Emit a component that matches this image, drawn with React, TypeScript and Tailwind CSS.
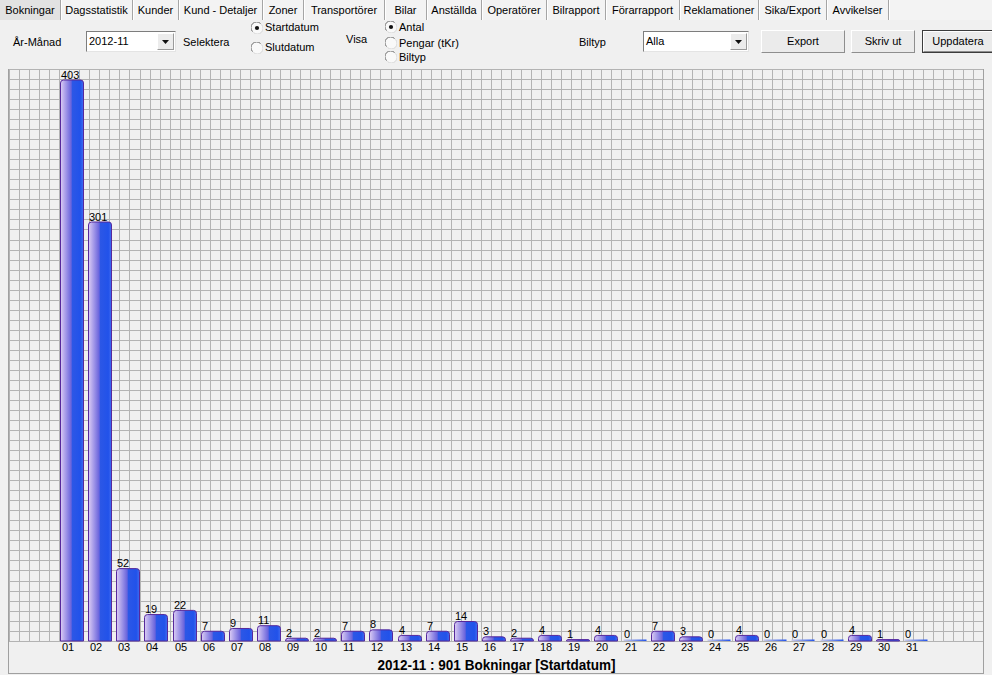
import React from 'react';

const tabs = [
  { label: 'Bokningar', w: 'w-[61px]' },
  { label: 'Dagsstatistik', w: 'w-[72px]' },
  { label: 'Kunder', w: 'w-[46px]' },
  { label: 'Kund - Detaljer', w: 'w-[84px]' },
  { label: 'Zoner', w: 'w-[41px]' },
  { label: 'Transportörer', w: 'w-[81px]' },
  { label: 'Bilar', w: 'w-[42px]' },
  { label: 'Anställda', w: 'w-[55px]' },
  { label: 'Operatörer', w: 'w-[65px]' },
  { label: 'Bilrapport', w: 'w-[59px]' },
  { label: 'Förarrapport', w: 'w-[74px]' },
  { label: 'Reklamationer', w: 'w-[79px]' },
  { label: 'Sika/Export', w: 'w-[68px]' },
  { label: 'Avvikelser', w: 'w-[62px]' },
];

const values = [403, 301, 52, 19, 22, 7, 9, 11, 2, 2, 7, 8, 4, 7, 14, 3, 2, 4, 1, 4, 0, 7, 3, 0, 4, 0, 0, 0, 4, 1, 0];

const BASE = 572;
const SCALE = 1.392;

function Radio({ checked }: { checked?: boolean }) {
  return (
    <svg width="12" height="12" viewBox="0 0 12 12" className="shrink-0">
      <circle cx="6" cy="6" r="5.5" fill="#f9f9f9" />
      <path d="M1.6 9.6 A5 5 0 0 1 9.6 1.6" fill="none" stroke="#6f6f6f" />
      <path d="M2.4 10.4 A5 5 0 0 0 10.4 2.4" fill="none" stroke="#d8d8d8" />
      {checked && <circle cx="6" cy="6" r="2.1" fill="#111" />}
    </svg>
  );
}

function Combo({ text, w }: { text: string; w: string }) {
  return (
    <div className={`${w} mt-[11px] h-[21px] shrink-0 bg-white border border-t-[#7d7d7d] border-l-[#7d7d7d] border-b-[#e4e4e4] border-r-[#e4e4e4] flex items-center`}>
      <span className="flex-1 pl-[2px]">{text}</span>
      <span className="w-[17px] h-[17px] mr-[1px] bg-[#ececec] border border-t-white border-l-white border-b-[#9a9a9a] border-r-[#9a9a9a] flex items-center justify-center">
        <svg width="7" height="4" viewBox="0 0 7 4">
          <path d="M0 0 H7 L3.5 4 Z" fill="#111" />
        </svg>
      </span>
    </div>
  );
}

function Button({ label, w, primary }: { label: string; w: string; primary?: boolean }) {
  return (
    <div className={`${w} mt-[10px] h-[23px] shrink-0 ${primary ? 'border border-[#3c3c3c]' : ''}`}>
      <div className="w-full h-full bg-[#ebebeb] border border-t-white border-l-white border-b-[#8e8e8e] border-r-[#8e8e8e] flex items-center justify-center">
        {label}
      </div>
    </div>
  );
}

function Chart() {
  const vLines: number[] = [];
  for (let k = 0; k <= 97; k++) vLines.push(Math.round(1 + k * 10.04) + 0.5);
  const hLines: number[] = [];
  for (let k = 0; k <= 57; k++) hLines.push(Math.round(k * 10.03) + 0.5);

  return (
    <svg width="976" height="605" className="block" style={{ fontFamily: '"Liberation Sans", Arial, sans-serif' }}>
      <defs>
        <linearGradient id="barFill" x1="0" y1="0" x2="1" y2="0">
          <stop offset="0" stopColor="#dccdf4" />
          <stop offset="0.46" stopColor="#6a64dc" />
          <stop offset="0.52" stopColor="#2c57e6" />
          <stop offset="0.86" stopColor="#2152ea" />
          <stop offset="1" stopColor="#416bf0" />
        </linearGradient>
        <linearGradient id="zeroFill" x1="0" y1="0" x2="1" y2="0">
          <stop offset="0" stopColor="#c9c9e8" />
          <stop offset="1" stopColor="#2152ea" />
        </linearGradient>
      </defs>
      <rect x="0" y="0" width="976" height="605" fill="#f0f0f0" />
      <g stroke="#b3b3b3" strokeWidth="1" shapeRendering="crispEdges">
        {vLines.map((x) => (
          <line key={'v' + x} x1={x} y1={0} x2={x} y2={BASE} />
        ))}
        {hLines.map((y) => (
          <line key={'h' + y} x1={1} y1={y} x2={975.5} y2={y} />
        ))}
        <line x1={1} y1={BASE + 0.5} x2={975.5} y2={BASE + 0.5} />
      </g>

      {values.map((v, i) => {
        const x0 = Math.round(52 + i * 28.13) + 0.5;
        const w = 23;
        const h = v * SCALE;
        const top = BASE - h;
        const day = String(i + 1).padStart(2, '0');
        let bar: React.ReactNode;
        if (v === 0) {
          bar = <rect x={x0} y={BASE - 1.5} width={w} height={1.5} fill="url(#zeroFill)" />;
        } else {
          const r = Math.min(3, h);
          const d = `M${x0} ${BASE} V${top + r} Q${x0} ${top} ${x0 + r} ${top} H${x0 + w - r} Q${x0 + w} ${top} ${x0 + w} ${top + r} V${BASE}`;
          bar = <path d={d + ' Z'} fill="url(#barFill)" stroke="#56289c" strokeWidth="1" />;
        }
        return (
          <g key={i}>
            {bar}
            <text x={x0 + 0.5} y={v === 0 ? BASE - 3 : top - 1.5} fontSize="11" fill="#000">
              {v}
            </text>
            <text x={x0 + 1.5} y={582} fontSize="11" fill="#000">
              {day}
            </text>
          </g>
        );
      })}

      <text x="488.5" y="601" fontSize="14.5" fontWeight="bold" textAnchor="middle" textLength="238" lengthAdjust="spacingAndGlyphs" fill="#000">
        2012-11 : 901 Bokningar [Startdatum]
      </text>

      <g stroke="#a0a0a0" shapeRendering="crispEdges">
        <line x1="0.5" y1="0" x2="0.5" y2="605" />
        <line x1="975.5" y1="0" x2="975.5" y2="605" />
        <line x1="0" y1="604.5" x2="976" y2="604.5" />
      </g>
    </svg>
  );
}

export default function App() {
  return (
    <div className="w-[992px] h-[675px] overflow-hidden bg-[#f0f0f0] text-[11px] text-black font-['Liberation_Sans',Arial,sans-serif]">
      {/* tab strip */}
      <div className="h-[20px] flex bg-[#f3f3f3]">
        {tabs.map((t, i) => (
          <div
            key={t.label}
            className={`${t.w} shrink-0 h-full flex items-center justify-center border-r border-r-[#a5a5a5] shadow-[1px_0_0_#ffffff] ${i === 0 ? 'bg-[#e2e2e2]' : ''}`}
          >
            {t.label}
          </div>
        ))}
      </div>

      {/* filter row */}
      <div className="h-[49px] flex items-start">
        <div className="w-[86px] shrink-0 pl-[13px] pt-[14px]">År-Månad</div>
        <Combo text="2012-11" w="w-[90px]" />
        <div className="w-[72px] shrink-0 pl-[7px] pt-[14px]">Selektera</div>
        <div className="w-[97px] shrink-0 pl-[3px] pt-[1px] flex flex-col">
          <div className="h-[13px] flex items-center gap-[2px]">
            <Radio checked />
            <span>Startdatum</span>
          </div>
          <div className="h-[13px] mt-[7px] flex items-center gap-[2px]">
            <Radio />
            <span>Slutdatum</span>
          </div>
        </div>
        <div className="w-[38px] shrink-0 pl-[1px] pt-[11px]">Visa</div>
        <div className="w-[196px] shrink-0 pl-[2px] flex flex-col">
          <div className="h-[14px] flex items-center gap-[2px]">
            <Radio checked />
            <span>Antal</span>
          </div>
          <div className="h-[14px] mt-[2px] flex items-center gap-[2px]">
            <Radio />
            <span>Pengar (tKr)</span>
          </div>
          <div className="h-[14px] flex items-center gap-[2px]">
            <Radio />
            <span>Biltyp</span>
          </div>
        </div>
        <div className="w-[64px] shrink-0 pt-[14px]">Biltyp</div>
        <Combo text="Alla" w="w-[106px]" />
        <div className="w-[12px] shrink-0" />
        <Button label="Export" w="w-[84px]" />
        <div className="w-[6px] shrink-0" />
        <Button label="Skriv ut" w="w-[64px]" />
        <div className="w-[7px] shrink-0" />
        <Button label="Uppdatera" w="w-[72px]" primary />
      </div>

      {/* chart panel */}
      <div className="mx-2">
        <Chart />
      </div>
    </div>
  );
}
